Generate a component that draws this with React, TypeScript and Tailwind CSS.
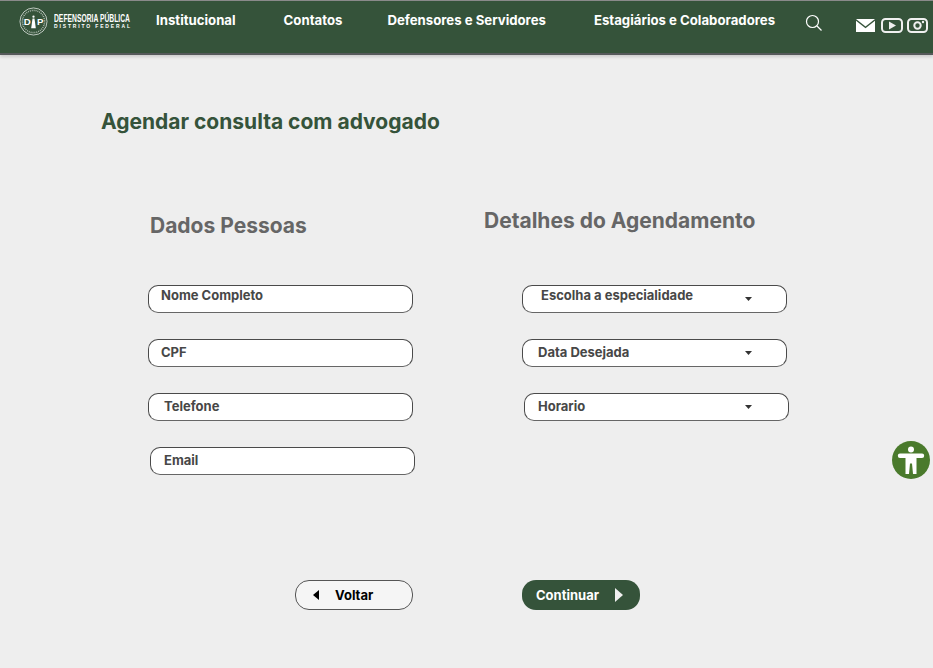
import { type FC } from "react";

const font = { fontFamily: "Inter, 'Noto Sans', sans-serif" };

const Logo: FC = () => (
  <div className="flex items-center gap-[6px]">
    <svg width="29" height="29" viewBox="0 0 30 30" className="text-white">
      <circle cx="15" cy="15" r="14" fill="none" stroke="currentColor" strokeWidth="0.7" />
      <circle cx="15" cy="15" r="11.5" fill="none" stroke="currentColor" strokeWidth="1.6" strokeDasharray="1 1" opacity="0.6" />
      <text x="5" y="19" fontSize="10" fontWeight="700" fill="currentColor" fontFamily="Liberation Sans">D</text>
      <text x="18.5" y="19" fontSize="10" fontWeight="700" fill="currentColor" fontFamily="Liberation Sans">P</text>
      <circle cx="15" cy="10" r="1.2" fill="currentColor" />
      <path d="M14 12h2l.6 4 .8 6h-4.8l.8-6z" fill="currentColor" />
    </svg>
    <div className="flex flex-col w-[78px] text-white font-['Liberation_Sans',sans-serif] font-bold leading-none">
      <span className="text-[10px] whitespace-nowrap origin-left scale-x-[0.675]">DEFENSORIA PÚBLICA</span>
      <span className="text-[5px] whitespace-nowrap tracking-[1.85px]">DISTRITO FEDERAL</span>
    </div>
  </div>
);

const Header: FC = () => (
  <header className="flex items-start h-[55px] bg-[#35533a] border-t border-[#8a8a8a] border-b-2 border-b-[#55595a] pl-[19px] shadow-[0_2px_3px_rgba(0,0,0,0.15)] text-white">
    <div className="mt-[6px]">
      <Logo />
    </div>
    <nav className="flex text-[13.2px] font-bold mt-[11px] leading-4 whitespace-nowrap">
      <a className="ml-[24px]">Institucional</a>
      <a className="ml-[48px]">Contatos</a>
      <a className="ml-[45px]">Defensores e Servidores</a>
      <a className="ml-[48px]">Estagiários e Colaboradores</a>
    </nav>
    <svg width="18" height="18" viewBox="0 0 18 18" fill="none" stroke="#fff" strokeWidth="1.2" className="ml-[30px] mt-[13px]">
      <circle cx="7.5" cy="7.5" r="6" />
      <path d="M12 12l4.5 4.5" />
    </svg>
    <div className="flex items-center ml-[33px] mt-[17px]">
      <svg width="19" height="13" viewBox="0 0 19 13">
        <path d="M0 0h19L9.5 7.5z" fill="#fff" />
        <path d="M0 1.8l9.5 7.4L19 1.8V13H0z" fill="#fff" />
      </svg>
      <svg width="22" height="15" viewBox="0 0 22 15" fill="none" className="ml-[6px]">
        <rect x="1" y="1" width="20" height="13" rx="3.5" stroke="#f0f0f0" strokeWidth="2" />
        <path d="M8 3.500l7 4-7 4z" fill="#f0f0f0" />
      </svg>
      <svg width="21" height="15" viewBox="0 0 21 15" fill="none" className="ml-[4px]">
        <rect x="1" y="1" width="19" height="13" rx="3.5" stroke="#f0f0f0" strokeWidth="2" />
        <circle cx="10.5" cy="7.5" r="3.2" stroke="#f0f0f0" strokeWidth="2" />
        <circle cx="16" cy="4" r="1.2" fill="#f0f0f0" />
      </svg>
    </div>
  </header>
);

const Field: FC<{ label: string; className?: string; textClass?: string; arrowClass?: string; select?: boolean }> = ({
  label,
  className = "",
  textClass = "",
  arrowClass = "mr-[34px]",
  select,
}) => (
  <div
    className={`flex w-[265px] h-[28px] bg-white rounded-[10px] border border-[#4a4a4a] border-b-[#666] text-[13px] font-bold text-[#474747] leading-4 ${className}`}
  >
    <span className={`whitespace-nowrap ${textClass}`}>{label}</span>
    {select && (
      <svg width="7" height="4" viewBox="0 0 7 4" className={`ml-auto mt-[11px] ${arrowClass}`}>
        <path d="M0 0h7L3.5 4z" fill="#333" />
      </svg>
    )}
  </div>
);

export default function App() {
  return (
    <div className="relative min-h-[668px] bg-[#eeeeee] overflow-hidden" style={font}>
      <Header />
      <main>
        <h1 className="ml-[101px] mt-[55px] text-[21px] leading-6 font-bold text-[#35533a] whitespace-nowrap">
          Agendar consulta com advogado
        </h1>
        <div className="flex mt-[75px]">
          <section className="ml-[148px] w-[336px]">
            <h2 className="ml-[2px] mt-[5px] text-[21px] leading-6 font-bold text-[#666666]">Dados Pessoas</h2>
            <div className="flex flex-col gap-[26px] mt-[47px]">
              <Field label="Nome Completo" textClass="ml-[12px] mt-[1px]" />
              <Field label="CPF" textClass="ml-[12px] mt-[4px]" />
              <Field label="Telefone" textClass="ml-[15px] mt-[4px]" />
              <Field label="Email" className="ml-[2px]" textClass="ml-[13px] mt-[4px]" />
            </div>
          </section>
          <section className="w-[320px]">
            <h2 className="text-[21px] leading-6 font-bold text-[#666666] whitespace-nowrap">Detalhes do Agendamento</h2>
            <div className="flex flex-col gap-[26px] mt-[52px] ml-[38px]">
              <Field label="Escolha a especialidade" select textClass="ml-[18px] mt-[1px]" />
              <Field label="Data Desejada" select textClass="ml-[15px] mt-[4px]" />
              <Field label="Horario" select className="ml-[2px]" arrowClass="mr-[36px]" textClass="ml-[13px] mt-[4px]" />
            </div>
          </section>
        </div>
        <div className="flex ml-[295px] gap-[109px] pt-[105px]">
          <button className="flex items-center w-[118px] h-[30px] rounded-[14px] bg-[#f5f5f5] border border-[#555] text-[13px] font-bold text-black">
            <svg width="6" height="10" viewBox="0 0 6 10" className="ml-[17px]">
              <path d="M6 0v10L0 5z" fill="#000" />
            </svg>
            <span className="ml-[16px] mt-[1px]">Voltar</span>
          </button>
          <button className="flex items-center w-[118px] h-[30px] rounded-[14px] bg-[#35533a] text-[13px] font-bold text-white">
            <span className="ml-[14px] mt-[1px]">Continuar</span>
            <svg width="8" height="14" viewBox="0 0 8 14" className="ml-[16px]">
              <path d="M0 0l8 7-8 7z" fill="#f0f0f0" />
            </svg>
          </button>
        </div>
      </main>
      <div className="absolute left-[892px] top-[441px] w-[38px] h-[38px] rounded-full bg-[#4a7a2c] flex items-center justify-center">
        <svg width="30" height="30" viewBox="0 0 30 30" fill="#fff">
          <circle cx="15" cy="4.500" r="3" />
          <path d="M4 8.500h22a2.200 2.200 0 0 1 0 4.400h-5.500V29h-3.500l-1-10.500h-2l-1 10.500H9.500V12.900H4a2.200 2.200 0 0 1 0-4.400z" />
        </svg>
      </div>
    </div>
  );
}
